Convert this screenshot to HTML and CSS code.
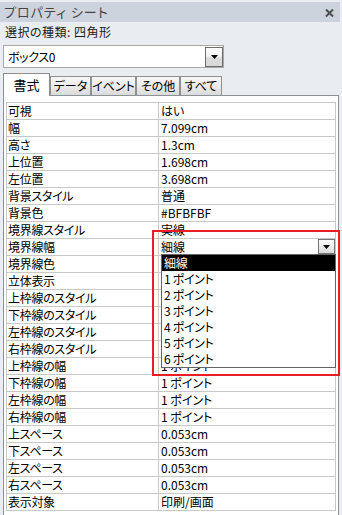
FILE: index.html
```html
<!DOCTYPE html>
<html lang="ja">
<head>
<meta charset="utf-8">
<title>プロパティ シート</title>
<link rel="stylesheet" href="styles.css">
</head>
<body>
<div class="titlebar">
  <span class="title">プロパティ シート</span>
  <svg class="close" width="9" height="8" viewBox="0 0 9 8"><path d="M1 0.5 L8 7.5 M8 0.5 L1 7.5" stroke="#4d4d4d" stroke-width="2"/></svg>
</div>
<div class="seltype">選択の種類: 四角形</div>
<div class="combo">
  <span class="combo-text">ボックス0</span>
  <span class="combo-btn"><svg width="7" height="4" viewBox="0 0 7 4"><path d="M0 0 H7 L3.5 4 Z" fill="#000"/></svg></span>
</div>
<div class="tabs">
  <div class="tab active">書式</div>
  <div class="tab w41">データ</div>
  <div class="tab w45">イベント</div>
  <div class="tab w44">その他</div>
  <div class="tab w42">すべて</div>
</div>
<div class="panel">
  <div class="grid">
    <div class="row"><div class="label">可視</div><div class="value">はい</div></div>
    <div class="row"><div class="label">幅</div><div class="value">7.099cm</div></div>
    <div class="row"><div class="label">高さ</div><div class="value">1.3cm</div></div>
    <div class="row"><div class="label">上位置</div><div class="value">1.698cm</div></div>
    <div class="row"><div class="label">左位置</div><div class="value">3.698cm</div></div>
    <div class="row"><div class="label">背景スタイル</div><div class="value">普通</div></div>
    <div class="row"><div class="label">背景色</div><div class="value">#BFBFBF</div></div>
    <div class="row"><div class="label">境界線スタイル</div><div class="value">実線</div></div>
    <div class="row"><div class="label">境界線幅</div><div class="value open">細線
      <span class="drop-btn"><svg width="7" height="4" viewBox="0 0 7 4"><path d="M0 0 H7 L3.5 4 Z" fill="#000"/></svg></span>
      <div class="list">
        <div class="item selected">細線</div>
        <div class="item">1 ポイント</div>
        <div class="item">2 ポイント</div>
        <div class="item">3 ポイント</div>
        <div class="item">4 ポイント</div>
        <div class="item">5 ポイント</div>
        <div class="item">6 ポイント</div>
      </div>
      <div class="highlight-box"></div>
    </div></div>
    <div class="row"><div class="label">境界線色</div><div class="value">#000000</div></div>
    <div class="row"><div class="label">立体表示</div><div class="value">標準</div></div>
    <div class="row"><div class="label">上枠線のスタイル</div><div class="value">透明</div></div>
    <div class="row"><div class="label">下枠線のスタイル</div><div class="value">透明</div></div>
    <div class="row"><div class="label">左枠線のスタイル</div><div class="value">透明</div></div>
    <div class="row"><div class="label">右枠線のスタイル</div><div class="value">透明</div></div>
    <div class="row"><div class="label">上枠線の幅</div><div class="value">1 ポイント</div></div>
    <div class="row"><div class="label">下枠線の幅</div><div class="value">1 ポイント</div></div>
    <div class="row"><div class="label">左枠線の幅</div><div class="value">1 ポイント</div></div>
    <div class="row"><div class="label">右枠線の幅</div><div class="value">1 ポイント</div></div>
    <div class="row"><div class="label">上スペース</div><div class="value">0.053cm</div></div>
    <div class="row"><div class="label">下スペース</div><div class="value">0.053cm</div></div>
    <div class="row"><div class="label">左スペース</div><div class="value">0.053cm</div></div>
    <div class="row"><div class="label">右スペース</div><div class="value">0.053cm</div></div>
    <div class="row"><div class="label">表示対象</div><div class="value">印刷/画面</div></div>
  </div>
</div>
</body>
</html>
```

FILE: styles.css
```css
html, body {
  margin: 0;
  padding: 0;
}
body {
  width: 342px;
  height: 515px;
  overflow: hidden;
  background: #e9ecf1;
  font-family: "Noto Sans CJK JP", "Noto Sans", sans-serif;
  font-feature-settings: "palt";
  font-size: 12px;
  color: #000;
}
.titlebar {
  margin-top: 2px;
  width: 340px;
  height: 20px;
  box-sizing: border-box;
  background: #cdd3dc;
  display: flex;
  align-items: center;
  justify-content: space-between;
  padding: 0 6px 0 4px;
}
.title {
  font-size: 13px;
  letter-spacing: 1px;
  line-height: 20px;
  color: #454545;
}
.close {
  display: block;
  margin-top: 1px;
}
.seltype {
  height: 19px;
  line-height: 19px;
  padding-left: 5px;
  margin-bottom: 4px;
  color: #1a1a1a;
  letter-spacing: 0.5px;
}
.combo {
  margin-left: 3px;
  width: 221px;
  height: 23px;
  box-sizing: border-box;
  border: 1px solid #a8a8a8;
  background: #fff;
  display: flex;
  align-items: flex-start;
  justify-content: space-between;
}
.combo-text {
  padding-left: 4px;
  line-height: 21px;
  letter-spacing: -0.4px;
}
.combo-btn {
  margin: 1px 0 0 0;
  width: 18px;
  height: 20px;
  box-sizing: border-box;
  border: 1px solid #6e6e6e;
  background: linear-gradient(#fbfbfb 0%, #f2f2f2 45%, #dcdcdc 55%, #d8d8d8 100%);
  display: flex;
  align-items: center;
  justify-content: center;
}
.tabs {
  margin-top: 5px;
  margin-left: 3px;
  height: 22px;
  display: flex;
  align-items: flex-end;
  position: relative;
  z-index: 2;
}
.tab {
  height: 19px;
  box-sizing: border-box;
  border: 1px solid #8f8f8f;
  border-bottom: none;
  background: linear-gradient(#f6f6f6 0%, #ececec 50%, #dadada 100%);
  display: flex;
  align-items: center;
  justify-content: center;
  line-height: 18px;
}
.tab.active {
  width: 47px;
  height: 23px;
  margin-bottom: -1px;
  background: #fff;
  font-size: 13px;
}
.w41 { width: 41px; }
.w45 { width: 45px; }
.w44 { width: 44px; }
.w42 { width: 42px; }
.panel {
  margin-left: 3px;
  width: 336px;
  height: 430px;
  box-sizing: border-box;
  border: 1px solid #8c9097;
  background: #fff;
  padding: 6px 0 0 2px;
  position: relative;
  z-index: 1;
}
.grid {
  width: 330px;
  box-sizing: border-box;
  border: 1px solid #c8c8c8;
  border-bottom: none;
}
.row {
  display: flex;
  height: 17px;
  box-sizing: border-box;
  border-bottom: 1px solid #c8c8c8;
}
.label {
  width: 152px;
  box-sizing: border-box;
  border-right: 1px solid #c8c8c8;
  padding-left: 1px;
  line-height: 16px;
  white-space: nowrap;
  letter-spacing: -0.3px;
}
.value {
  flex: 1;
  padding-left: 2px;
  line-height: 16px;
  white-space: nowrap;
}
.value.open {
  position: relative;
}
.drop-btn {
  position: absolute;
  right: 0;
  top: 0;
  width: 17px;
  height: 15px;
  box-sizing: border-box;
  border: 1px solid #737373;
  background: linear-gradient(#fcfcfc 0%, #eeeeee 50%, #dadada 100%);
  display: flex;
  align-items: center;
  justify-content: center;
}
.list {
  position: absolute;
  left: 2px;
  top: 15px;
  width: 175px;
  box-sizing: border-box;
  border: 1px solid #646464;
  background: #fff;
  z-index: 3;
}
.item {
  height: 16px;
  line-height: 16px;
  padding-left: 2px;
  letter-spacing: -0.3px;
}
.item.selected {
  background: #000;
  color: #fff;
}
.highlight-box {
  position: absolute;
  left: -7px;
  top: -9px;
  width: 188px;
  height: 146px;
  box-sizing: border-box;
  border: 2px solid #ed1c24;
  z-index: 4;
}
```
